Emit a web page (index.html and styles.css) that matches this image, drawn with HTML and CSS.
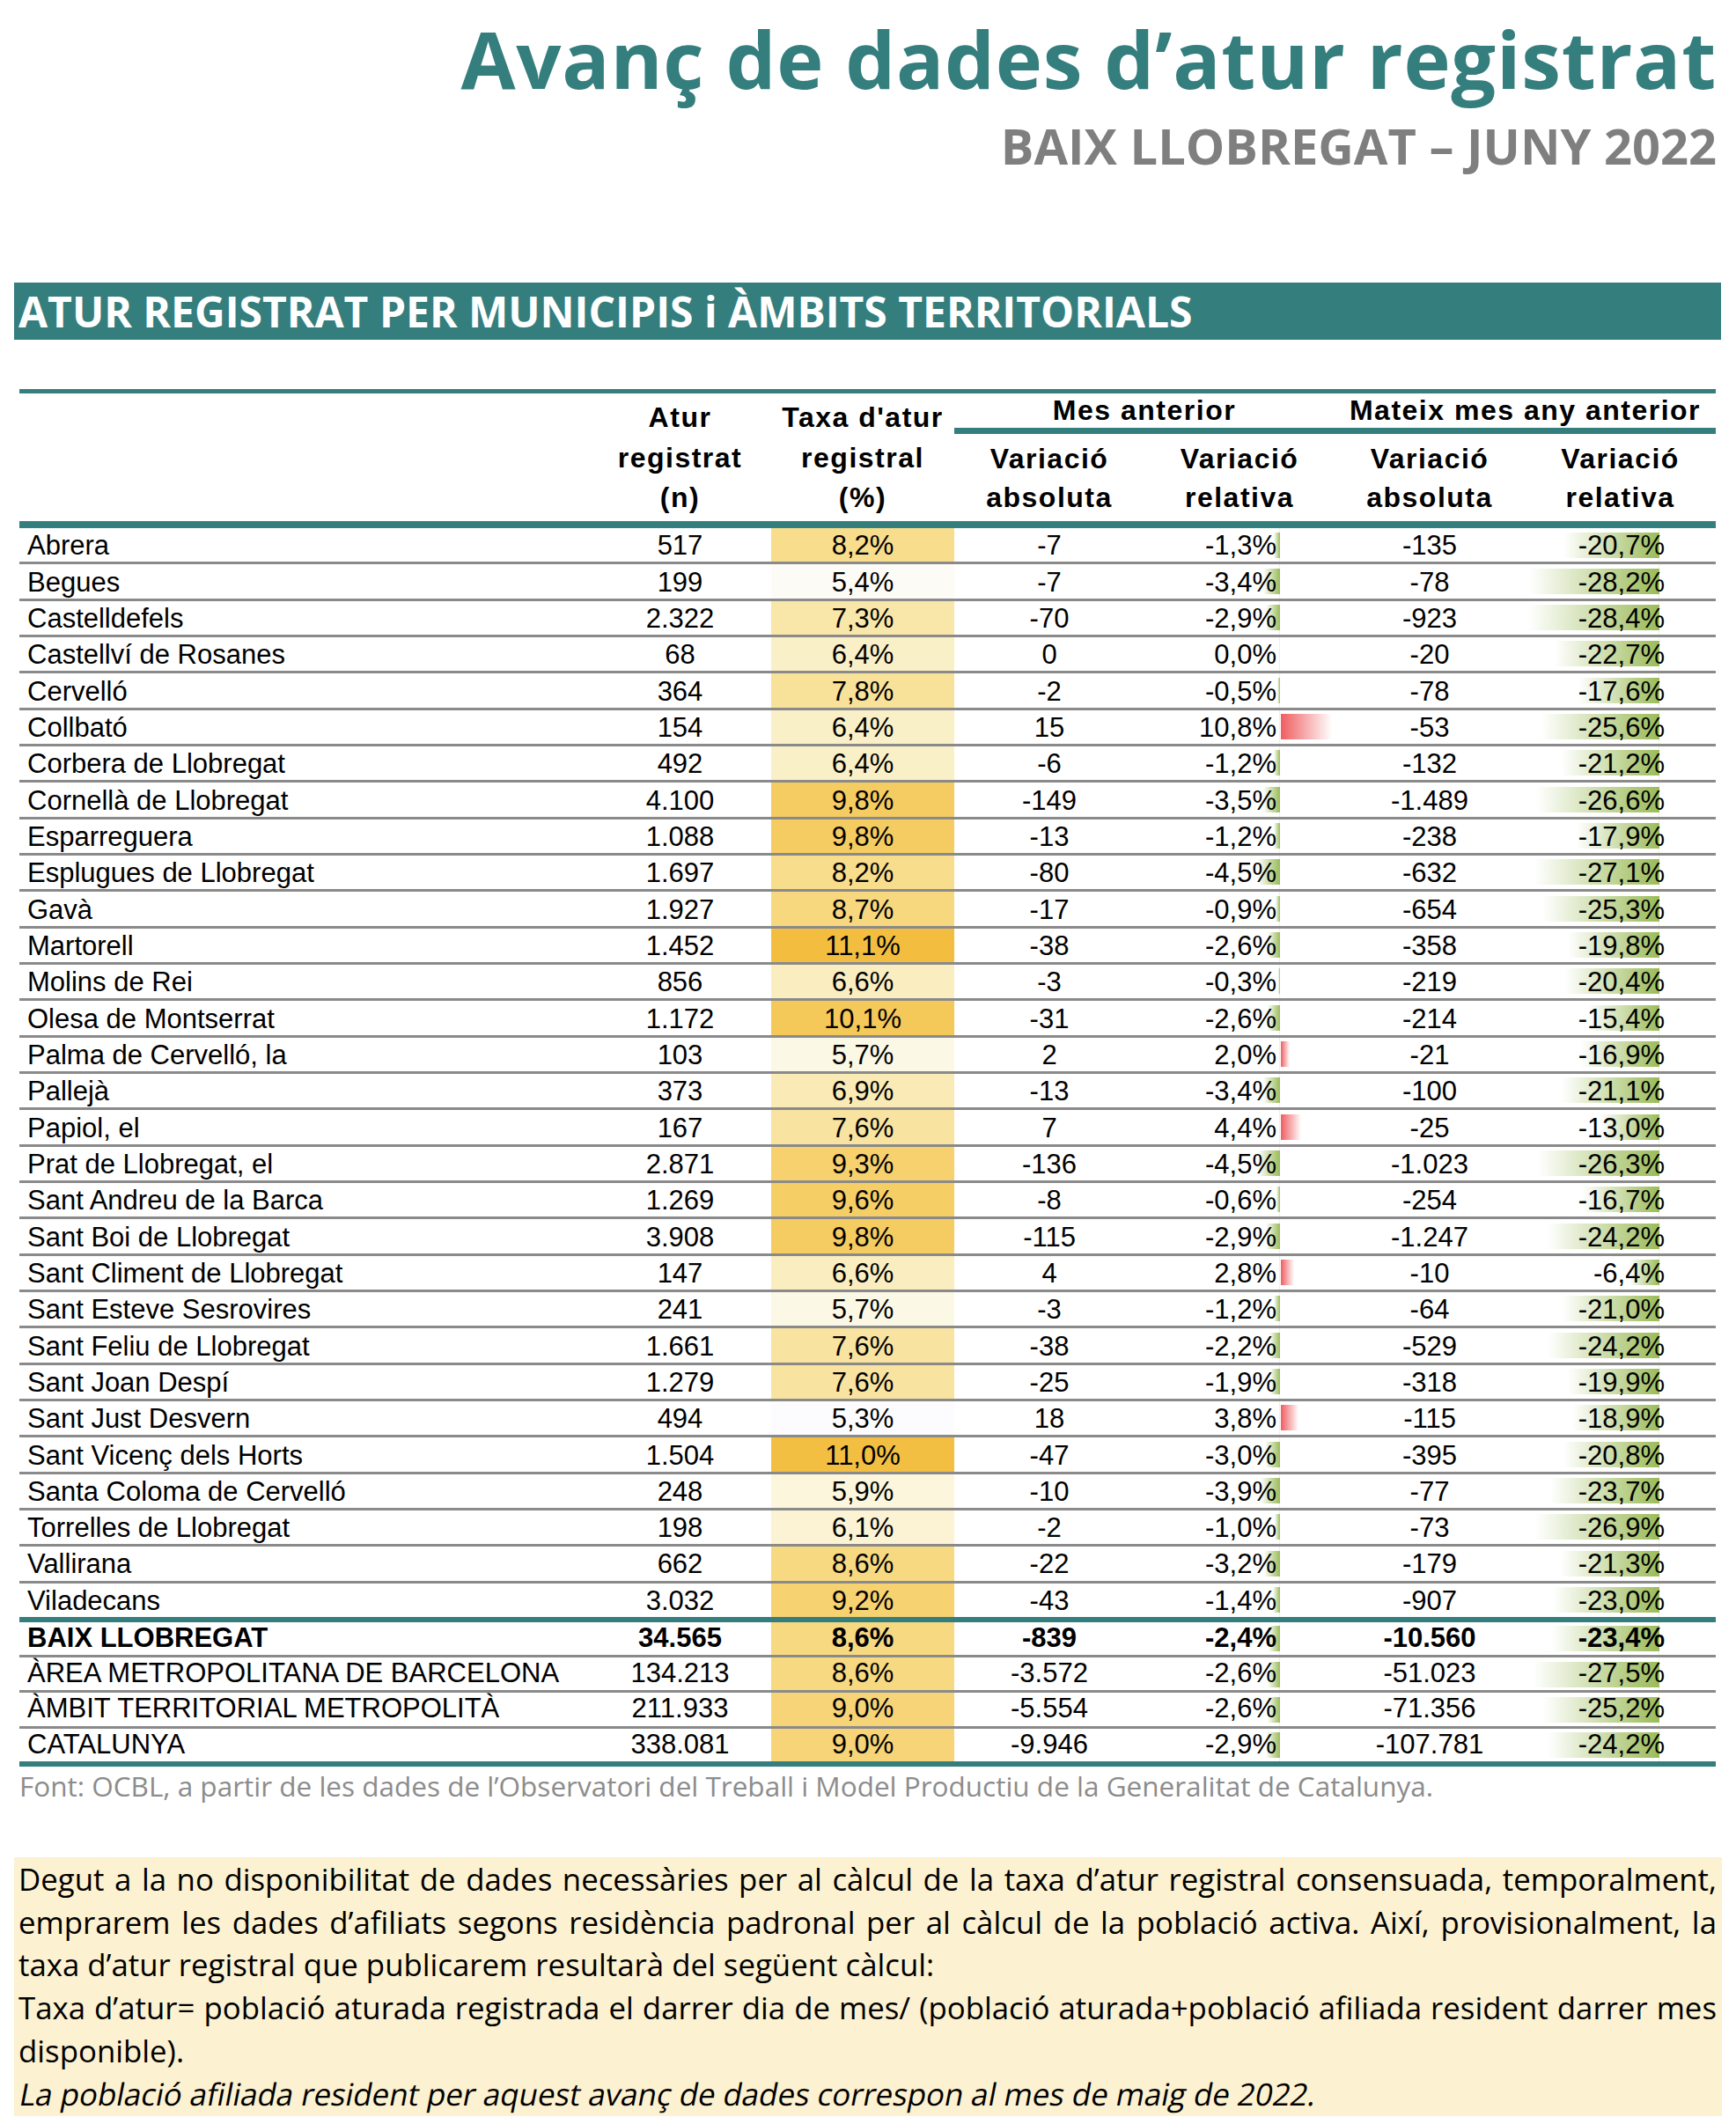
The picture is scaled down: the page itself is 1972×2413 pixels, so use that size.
FILE: index.html
```html
<!DOCTYPE html>
<html lang="ca">

<head>
    <meta charset="UTF-8">
    <meta name="viewport" content="width=device-width, initial-scale=1.0">
    <title>Avanç de dades d’atur registrat - Baix Llobregat</title>
    <link rel="stylesheet" href="styles.css">
</head>

<body>
    <div class="page">
        <header class="doc-head">
            <h1 class="title">Avanç de dades d’atur registrat</h1>
            <p class="subtitle">BAIX LLOBREGAT – JUNY 2022</p>
        </header>

        <h2 class="section-bar">ATUR REGISTRAT PER MUNICIPIS i ÀMBITS TERRITORIALS</h2>

        <div class="atur-table">
            <div class="thead">
                <div class="th th-blank"></div>
                <div class="th th-main">Atur<br>registrat<br>(n)</div>
                <div class="th th-main">Taxa d'atur<br>registral<br>(%)</div>
                <div class="th th-group g1">Mes anterior</div>
                <div class="th th-group g2">Mateix mes any anterior</div>
                <div class="th th-sub">Variació<br>absoluta</div>
                <div class="th th-sub">Variació<br>relativa</div>
                <div class="th th-sub">Variació<br>absoluta</div>
                <div class="th th-sub">Variació<br>relativa</div>
            </div>

            <!-- municipis -->
            <div class="tbody">
                <div class="row">
                    <div class="cell name">Abrera</div>
                    <div class="cell">517</div>
                    <div class="cell taxa" style="background:#f8dd8d">8,2%</div>
                    <div class="cell">-7</div>
                    <div class="cell rel mes"><span class="bar neg" style="width:7px"></span><span class="num">-1,3%</span></div>
                    <div class="cell">-135</div>
                    <div class="cell rel any"><span class="bar neg" style="width:108.7px"></span><span class="num">-20,7%</span></div>
                </div>
                <div class="row">
                    <div class="cell name">Begues</div>
                    <div class="cell">199</div>
                    <div class="cell taxa" style="background:#fcfbf6">5,4%</div>
                    <div class="cell">-7</div>
                    <div class="cell rel mes"><span class="bar neg" style="width:18.4px"></span><span class="num">-3,4%</span></div>
                    <div class="cell">-78</div>
                    <div class="cell rel any"><span class="bar neg" style="width:148.1px"></span><span class="num">-28,2%</span></div>
                </div>
                <div class="row">
                    <div class="cell name">Castelldefels</div>
                    <div class="cell">2.322</div>
                    <div class="cell taxa" style="background:#f9e7a9">7,3%</div>
                    <div class="cell">-70</div>
                    <div class="cell rel mes"><span class="bar neg" style="width:15.7px"></span><span class="num">-2,9%</span></div>
                    <div class="cell">-923</div>
                    <div class="cell rel any"><span class="bar neg" style="width:149.1px"></span><span class="num">-28,4%</span></div>
                </div>
                <div class="row">
                    <div class="cell name">Castellví de Rosanes</div>
                    <div class="cell">68</div>
                    <div class="cell taxa" style="background:#faf0c8">6,4%</div>
                    <div class="cell">0</div>
                    <div class="cell rel mes"><span class="num">0,0%</span></div>
                    <div class="cell">-20</div>
                    <div class="cell rel any"><span class="bar neg" style="width:119.2px"></span><span class="num">-22,7%</span></div>
                </div>
                <div class="row">
                    <div class="cell name">Cervelló</div>
                    <div class="cell">364</div>
                    <div class="cell taxa" style="background:#f8e199">7,8%</div>
                    <div class="cell">-2</div>
                    <div class="cell rel mes"><span class="bar neg" style="width:2.7px"></span><span class="num">-0,5%</span></div>
                    <div class="cell">-78</div>
                    <div class="cell rel any"><span class="bar neg" style="width:92.4px"></span><span class="num">-17,6%</span></div>
                </div>
                <div class="row">
                    <div class="cell name">Collbató</div>
                    <div class="cell">154</div>
                    <div class="cell taxa" style="background:#faf0c8">6,4%</div>
                    <div class="cell">15</div>
                    <div class="cell rel mes"><span class="bar pos" style="width:58.3px"></span><span class="num">10,8%</span></div>
                    <div class="cell">-53</div>
                    <div class="cell rel any"><span class="bar neg" style="width:134.4px"></span><span class="num">-25,6%</span></div>
                </div>
                <div class="row">
                    <div class="cell name">Corbera de Llobregat</div>
                    <div class="cell">492</div>
                    <div class="cell taxa" style="background:#faf0c8">6,4%</div>
                    <div class="cell">-6</div>
                    <div class="cell rel mes"><span class="bar neg" style="width:6.5px"></span><span class="num">-1,2%</span></div>
                    <div class="cell">-132</div>
                    <div class="cell rel any"><span class="bar neg" style="width:111.3px"></span><span class="num">-21,2%</span></div>
                </div>
                <div class="row">
                    <div class="cell name">Cornellà de Llobregat</div>
                    <div class="cell">4.100</div>
                    <div class="cell taxa" style="background:#f5cc61">9,8%</div>
                    <div class="cell">-149</div>
                    <div class="cell rel mes"><span class="bar neg" style="width:18.9px"></span><span class="num">-3,5%</span></div>
                    <div class="cell">-1.489</div>
                    <div class="cell rel any"><span class="bar neg" style="width:139.7px"></span><span class="num">-26,6%</span></div>
                </div>
                <div class="row">
                    <div class="cell name">Esparreguera</div>
                    <div class="cell">1.088</div>
                    <div class="cell taxa" style="background:#f5cc61">9,8%</div>
                    <div class="cell">-13</div>
                    <div class="cell rel mes"><span class="bar neg" style="width:6.5px"></span><span class="num">-1,2%</span></div>
                    <div class="cell">-238</div>
                    <div class="cell rel any"><span class="bar neg" style="width:94px"></span><span class="num">-17,9%</span></div>
                </div>
                <div class="row">
                    <div class="cell name">Esplugues de Llobregat</div>
                    <div class="cell">1.697</div>
                    <div class="cell taxa" style="background:#f8dd8d">8,2%</div>
                    <div class="cell">-80</div>
                    <div class="cell rel mes"><span class="bar neg" style="width:24.3px"></span><span class="num">-4,5%</span></div>
                    <div class="cell">-632</div>
                    <div class="cell rel any"><span class="bar neg" style="width:142.3px"></span><span class="num">-27,1%</span></div>
                </div>
                <div class="row">
                    <div class="cell name">Gavà</div>
                    <div class="cell">1.927</div>
                    <div class="cell taxa" style="background:#f7d87f">8,7%</div>
                    <div class="cell">-17</div>
                    <div class="cell rel mes"><span class="bar neg" style="width:4.9px"></span><span class="num">-0,9%</span></div>
                    <div class="cell">-654</div>
                    <div class="cell rel any"><span class="bar neg" style="width:132.8px"></span><span class="num">-25,3%</span></div>
                </div>
                <div class="row">
                    <div class="cell name">Martorell</div>
                    <div class="cell">1.452</div>
                    <div class="cell taxa" style="background:#f3be40">11,1%</div>
                    <div class="cell">-38</div>
                    <div class="cell rel mes"><span class="bar neg" style="width:14px"></span><span class="num">-2,6%</span></div>
                    <div class="cell">-358</div>
                    <div class="cell rel any"><span class="bar neg" style="width:104px"></span><span class="num">-19,8%</span></div>
                </div>
                <div class="row">
                    <div class="cell name">Molins de Rei</div>
                    <div class="cell">856</div>
                    <div class="cell taxa" style="background:#faeec1">6,6%</div>
                    <div class="cell">-3</div>
                    <div class="cell rel mes"><span class="bar neg" style="width:1.6px"></span><span class="num">-0,3%</span></div>
                    <div class="cell">-219</div>
                    <div class="cell rel any"><span class="bar neg" style="width:107.1px"></span><span class="num">-20,4%</span></div>
                </div>
                <div class="row">
                    <div class="cell name">Olesa de Montserrat</div>
                    <div class="cell">1.172</div>
                    <div class="cell taxa" style="background:#f5c959">10,1%</div>
                    <div class="cell">-31</div>
                    <div class="cell rel mes"><span class="bar neg" style="width:14px"></span><span class="num">-2,6%</span></div>
                    <div class="cell">-214</div>
                    <div class="cell rel any"><span class="bar neg" style="width:80.9px"></span><span class="num">-15,4%</span></div>
                </div>
                <div class="row">
                    <div class="cell name">Palma de Cervelló, la</div>
                    <div class="cell">103</div>
                    <div class="cell taxa" style="background:#fbf8e5">5,7%</div>
                    <div class="cell">2</div>
                    <div class="cell rel mes"><span class="bar pos" style="width:10.8px"></span><span class="num">2,0%</span></div>
                    <div class="cell">-21</div>
                    <div class="cell rel any"><span class="bar neg" style="width:88.7px"></span><span class="num">-16,9%</span></div>
                </div>
                <div class="row">
                    <div class="cell name">Pallejà</div>
                    <div class="cell">373</div>
                    <div class="cell taxa" style="background:#faebb6">6,9%</div>
                    <div class="cell">-13</div>
                    <div class="cell rel mes"><span class="bar neg" style="width:18.4px"></span><span class="num">-3,4%</span></div>
                    <div class="cell">-100</div>
                    <div class="cell rel any"><span class="bar neg" style="width:110.8px"></span><span class="num">-21,1%</span></div>
                </div>
                <div class="row">
                    <div class="cell name">Papiol, el</div>
                    <div class="cell">167</div>
                    <div class="cell taxa" style="background:#f8e3a0">7,6%</div>
                    <div class="cell">7</div>
                    <div class="cell rel mes"><span class="bar pos" style="width:23.8px"></span><span class="num">4,4%</span></div>
                    <div class="cell">-25</div>
                    <div class="cell rel any"><span class="bar neg" style="width:68.3px"></span><span class="num">-13,0%</span></div>
                </div>
                <div class="row">
                    <div class="cell name">Prat de Llobregat, el</div>
                    <div class="cell">2.871</div>
                    <div class="cell taxa" style="background:#f6d16e">9,3%</div>
                    <div class="cell">-136</div>
                    <div class="cell rel mes"><span class="bar neg" style="width:24.3px"></span><span class="num">-4,5%</span></div>
                    <div class="cell">-1.023</div>
                    <div class="cell rel any"><span class="bar neg" style="width:138.1px"></span><span class="num">-26,3%</span></div>
                </div>
                <div class="row">
                    <div class="cell name">Sant Andreu de la Barca</div>
                    <div class="cell">1.269</div>
                    <div class="cell taxa" style="background:#f5ce66">9,6%</div>
                    <div class="cell">-8</div>
                    <div class="cell rel mes"><span class="bar neg" style="width:3.2px"></span><span class="num">-0,6%</span></div>
                    <div class="cell">-254</div>
                    <div class="cell rel any"><span class="bar neg" style="width:87.7px"></span><span class="num">-16,7%</span></div>
                </div>
                <div class="row">
                    <div class="cell name">Sant Boi de Llobregat</div>
                    <div class="cell">3.908</div>
                    <div class="cell taxa" style="background:#f5cc61">9,8%</div>
                    <div class="cell">-115</div>
                    <div class="cell rel mes"><span class="bar neg" style="width:15.7px"></span><span class="num">-2,9%</span></div>
                    <div class="cell">-1.247</div>
                    <div class="cell rel any"><span class="bar neg" style="width:127.1px"></span><span class="num">-24,2%</span></div>
                </div>
                <div class="row">
                    <div class="cell name">Sant Climent de Llobregat</div>
                    <div class="cell">147</div>
                    <div class="cell taxa" style="background:#faeec1">6,6%</div>
                    <div class="cell">4</div>
                    <div class="cell rel mes"><span class="bar pos" style="width:15.1px"></span><span class="num">2,8%</span></div>
                    <div class="cell">-10</div>
                    <div class="cell rel any"><span class="bar neg" style="width:33.6px"></span><span class="num">-6,4%</span></div>
                </div>
                <div class="row">
                    <div class="cell name">Sant Esteve Sesrovires</div>
                    <div class="cell">241</div>
                    <div class="cell taxa" style="background:#fbf8e5">5,7%</div>
                    <div class="cell">-3</div>
                    <div class="cell rel mes"><span class="bar neg" style="width:6.5px"></span><span class="num">-1,2%</span></div>
                    <div class="cell">-64</div>
                    <div class="cell rel any"><span class="bar neg" style="width:110.3px"></span><span class="num">-21,0%</span></div>
                </div>
                <div class="row">
                    <div class="cell name">Sant Feliu de Llobregat</div>
                    <div class="cell">1.661</div>
                    <div class="cell taxa" style="background:#f8e3a0">7,6%</div>
                    <div class="cell">-38</div>
                    <div class="cell rel mes"><span class="bar neg" style="width:11.9px"></span><span class="num">-2,2%</span></div>
                    <div class="cell">-529</div>
                    <div class="cell rel any"><span class="bar neg" style="width:127.1px"></span><span class="num">-24,2%</span></div>
                </div>
                <div class="row">
                    <div class="cell name">Sant Joan Despí</div>
                    <div class="cell">1.279</div>
                    <div class="cell taxa" style="background:#f8e3a0">7,6%</div>
                    <div class="cell">-25</div>
                    <div class="cell rel mes"><span class="bar neg" style="width:10.3px"></span><span class="num">-1,9%</span></div>
                    <div class="cell">-318</div>
                    <div class="cell rel any"><span class="bar neg" style="width:104.5px"></span><span class="num">-19,9%</span></div>
                </div>
                <div class="row">
                    <div class="cell name">Sant Just Desvern</div>
                    <div class="cell">494</div>
                    <div class="cell taxa" style="background:#fcfcff">5,3%</div>
                    <div class="cell">18</div>
                    <div class="cell rel mes"><span class="bar pos" style="width:20.5px"></span><span class="num">3,8%</span></div>
                    <div class="cell">-115</div>
                    <div class="cell rel any"><span class="bar neg" style="width:99.2px"></span><span class="num">-18,9%</span></div>
                </div>
                <div class="row">
                    <div class="cell name">Sant Vicenç dels Horts</div>
                    <div class="cell">1.504</div>
                    <div class="cell taxa" style="background:#f3bf43">11,0%</div>
                    <div class="cell">-47</div>
                    <div class="cell rel mes"><span class="bar neg" style="width:16.2px"></span><span class="num">-3,0%</span></div>
                    <div class="cell">-395</div>
                    <div class="cell rel any"><span class="bar neg" style="width:109.2px"></span><span class="num">-20,8%</span></div>
                </div>
                <div class="row">
                    <div class="cell name">Santa Coloma de Cervelló</div>
                    <div class="cell">248</div>
                    <div class="cell taxa" style="background:#fbf6dc">5,9%</div>
                    <div class="cell">-10</div>
                    <div class="cell rel mes"><span class="bar neg" style="width:21.1px"></span><span class="num">-3,9%</span></div>
                    <div class="cell">-77</div>
                    <div class="cell rel any"><span class="bar neg" style="width:124.4px"></span><span class="num">-23,7%</span></div>
                </div>
                <div class="row">
                    <div class="cell name">Torrelles de Llobregat</div>
                    <div class="cell">198</div>
                    <div class="cell taxa" style="background:#fbf3d4">6,1%</div>
                    <div class="cell">-2</div>
                    <div class="cell rel mes"><span class="bar neg" style="width:5.4px"></span><span class="num">-1,0%</span></div>
                    <div class="cell">-73</div>
                    <div class="cell rel any"><span class="bar neg" style="width:141.2px"></span><span class="num">-26,9%</span></div>
                </div>
                <div class="row">
                    <div class="cell name">Vallirana</div>
                    <div class="cell">662</div>
                    <div class="cell taxa" style="background:#f7d982">8,6%</div>
                    <div class="cell">-22</div>
                    <div class="cell rel mes"><span class="bar neg" style="width:17.3px"></span><span class="num">-3,2%</span></div>
                    <div class="cell">-179</div>
                    <div class="cell rel any"><span class="bar neg" style="width:111.8px"></span><span class="num">-21,3%</span></div>
                </div>
                <div class="row">
                    <div class="cell name">Viladecans</div>
                    <div class="cell">3.032</div>
                    <div class="cell taxa" style="background:#f6d271">9,2%</div>
                    <div class="cell">-43</div>
                    <div class="cell rel mes"><span class="bar neg" style="width:7.6px"></span><span class="num">-1,4%</span></div>
                    <div class="cell">-907</div>
                    <div class="cell rel any"><span class="bar neg" style="width:120.8px"></span><span class="num">-23,0%</span></div>
                </div>
            </div>

            <!-- àmbits territorials -->
            <div class="tbody totals">
                <div class="row total-main">
                    <div class="cell name">BAIX LLOBREGAT</div>
                    <div class="cell">34.565</div>
                    <div class="cell taxa" style="background:#f7d982">8,6%</div>
                    <div class="cell">-839</div>
                    <div class="cell rel mes"><span class="bar neg" style="width:13px"></span><span class="num">-2,4%</span></div>
                    <div class="cell">-10.560</div>
                    <div class="cell rel any"><span class="bar neg" style="width:122.9px"></span><span class="num">-23,4%</span></div>
                </div>
                <div class="row">
                    <div class="cell name">ÀREA METROPOLITANA DE BARCELONA</div>
                    <div class="cell">134.213</div>
                    <div class="cell taxa" style="background:#f7d982">8,6%</div>
                    <div class="cell">-3.572</div>
                    <div class="cell rel mes"><span class="bar neg" style="width:14px"></span><span class="num">-2,6%</span></div>
                    <div class="cell">-51.023</div>
                    <div class="cell rel any"><span class="bar neg" style="width:144.4px"></span><span class="num">-27,5%</span></div>
                </div>
                <div class="row">
                    <div class="cell name">ÀMBIT TERRITORIAL METROPOLITÀ</div>
                    <div class="cell">211.933</div>
                    <div class="cell taxa" style="background:#f6d477">9,0%</div>
                    <div class="cell">-5.554</div>
                    <div class="cell rel mes"><span class="bar neg" style="width:14px"></span><span class="num">-2,6%</span></div>
                    <div class="cell">-71.356</div>
                    <div class="cell rel any"><span class="bar neg" style="width:132.3px"></span><span class="num">-25,2%</span></div>
                </div>
                <div class="row">
                    <div class="cell name">CATALUNYA</div>
                    <div class="cell">338.081</div>
                    <div class="cell taxa" style="background:#f6d477">9,0%</div>
                    <div class="cell">-9.946</div>
                    <div class="cell rel mes"><span class="bar neg" style="width:15.7px"></span><span class="num">-2,9%</span></div>
                    <div class="cell">-107.781</div>
                    <div class="cell rel any"><span class="bar neg" style="width:127.1px"></span><span class="num">-24,2%</span></div>
                </div>
            </div>
        </div>

        <p class="source">Font: OCBL, a partir de les dades de l’Observatori del Treball i Model Productiu de la Generalitat de Catalunya.</p>

        <div class="note">
            <p class="line justify">Degut a la no disponibilitat de dades necessàries per al càlcul de la taxa d’atur registral consensuada, temporalment,</p>
            <p class="line justify">emprarem les dades d’afiliats segons residència padronal per al càlcul de la població activa. Així, provisionalment, la</p>
            <p class="line">taxa d’atur registral que publicarem resultarà del següent càlcul:</p>
            <p class="line justify">Taxa d’atur= població aturada registrada el darrer dia de mes/ (població aturada+població afiliada resident darrer mes</p>
            <p class="line">disponible).</p>
            <p class="line"><span class="slanted">La població afiliada resident per aquest avanç de dades correspon al mes de maig de 2022.</span></p>
        </div>
    </div>
</body>

</html>
```

FILE: styles.css
```css
body {
    margin: 0;
    background-color: #ffffff;
    color: #000000;
    font-family: "Liberation Sans", Arial, sans-serif;
}

.page {
    width: 1972px;
}

/* capçalera */
.doc-head {
    padding: 21px 22px 0 0;
    text-align: right;
}

.title {
    margin: 0;
    font-family: "Open Sans", sans-serif;
    font-weight: 700;
    font-size: 90px;
    line-height: 90px;
    letter-spacing: 0.75px;
    color: #357e7e;
}

.subtitle {
    margin: 26px 0 0;
    font-family: "Open Sans", sans-serif;
    font-weight: 700;
    font-size: 56px;
    line-height: 56px;
    color: #7f7f7f;
}

.section-bar {
    margin: 128px 17px 0 16px;
    height: 65px;
    padding-left: 5px;
    background-color: #357e7e;
    color: #ffffff;
    font-family: "Open Sans", sans-serif;
    font-weight: 700;
    font-size: 48px;
    line-height: 66px;
    white-space: nowrap;
}

/* taula */
.atur-table {
    margin: 56px 23px 0 22px;
}

.thead,
.row {
    display: grid;
    grid-template-columns: 647px 207px 208px 216px 216px 216px 217px;
}

.thead {
    grid-template-rows: 46px 99px;
    border-top: 5px solid #357e7e;
    border-bottom: 8px solid #357e7e;
    font-weight: bold;
    font-size: 32px;
    letter-spacing: 1.5px;
    text-align: center;
}

.th-blank {
    grid-row: 1 / 3;
}

.th-main {
    grid-row: 1 / 3;
    padding-top: 5px;
    line-height: 45.5px;
}

.th-group {
    grid-row: 1;
    grid-column: span 2;
    line-height: 39px;
    border-bottom: 7px solid #357e7e;
}

.th-sub {
    grid-row: 2;
    padding-top: 6px;
    line-height: 44.4px;
}

.tbody {
    border-bottom: 6px solid #357e7e;
}

.row {
    height: 41.33px;
    box-sizing: border-box;
    border-bottom: 3px solid #8a8a8a;
    font-size: 31px;
}

.row:last-child {
    height: 38.33px;
    border-bottom: none;
}

.totals .row {
    height: 40.3px;
}

.totals .row:last-child {
    height: 37.3px;
}

.cell {
    position: relative;
    padding-top: 2.3px;
    line-height: 36px;
    text-align: center;
    white-space: nowrap;
}

.totals .cell {
    padding-top: 0;
}

.cell.name {
    padding-left: 9px;
    text-align: left;
}

.total-main .cell {
    font-weight: bold;
}

.cell.rel {
    text-align: right;
}

.cell.mes {
    padding-right: 66px;
}

.cell.any {
    padding-right: 58px;
}

/* barres de dades */
.cell.rel::before {
    content: "";
    position: absolute;
    top: 0;
    bottom: 0;
    width: 1px;
    background-color: rgba(155, 187, 89, 0.18);
}

.cell.mes::before {
    left: 153px;
}

.cell.any::before {
    left: 152px;
}

.bar {
    position: absolute;
    top: 4.5px;
    height: 29px;
}

.bar.neg {
    background: linear-gradient(to right, #ffffff, #9bbb59);
}

.bar.pos {
    background: linear-gradient(to right, #ef5d60, #ffffff);
}

.mes .bar.neg {
    right: 62.5px;
}

.mes .bar.pos {
    left: 154.5px;
}

.any .bar.neg {
    right: 64px;
}

.num {
    position: relative;
}

/* peu */
.source {
    margin: 2px 0 0 22px;
    font-family: "Open Sans", sans-serif;
    font-size: 31.5px;
    line-height: 40px;
    color: #8c8c8c;
}

.note {
    margin: 61px 16px 0 16px;
    padding: 1px 6px 1px 5px;
    background-color: #fcf1d0;
    font-family: "Open Sans", sans-serif;
    font-size: 34.8px;
    line-height: 48.7px;
}

.line {
    margin: 0;
    white-space: nowrap;
}

.line.justify {
    white-space: normal;
    text-align: justify;
    text-align-last: justify;
}

/* cursiva sintètica, amb l'amplada de la lletra rodona */
.slanted {
    display: inline-block;
    transform: skewX(-11deg);
    transform-origin: 0 70%;
}
```
